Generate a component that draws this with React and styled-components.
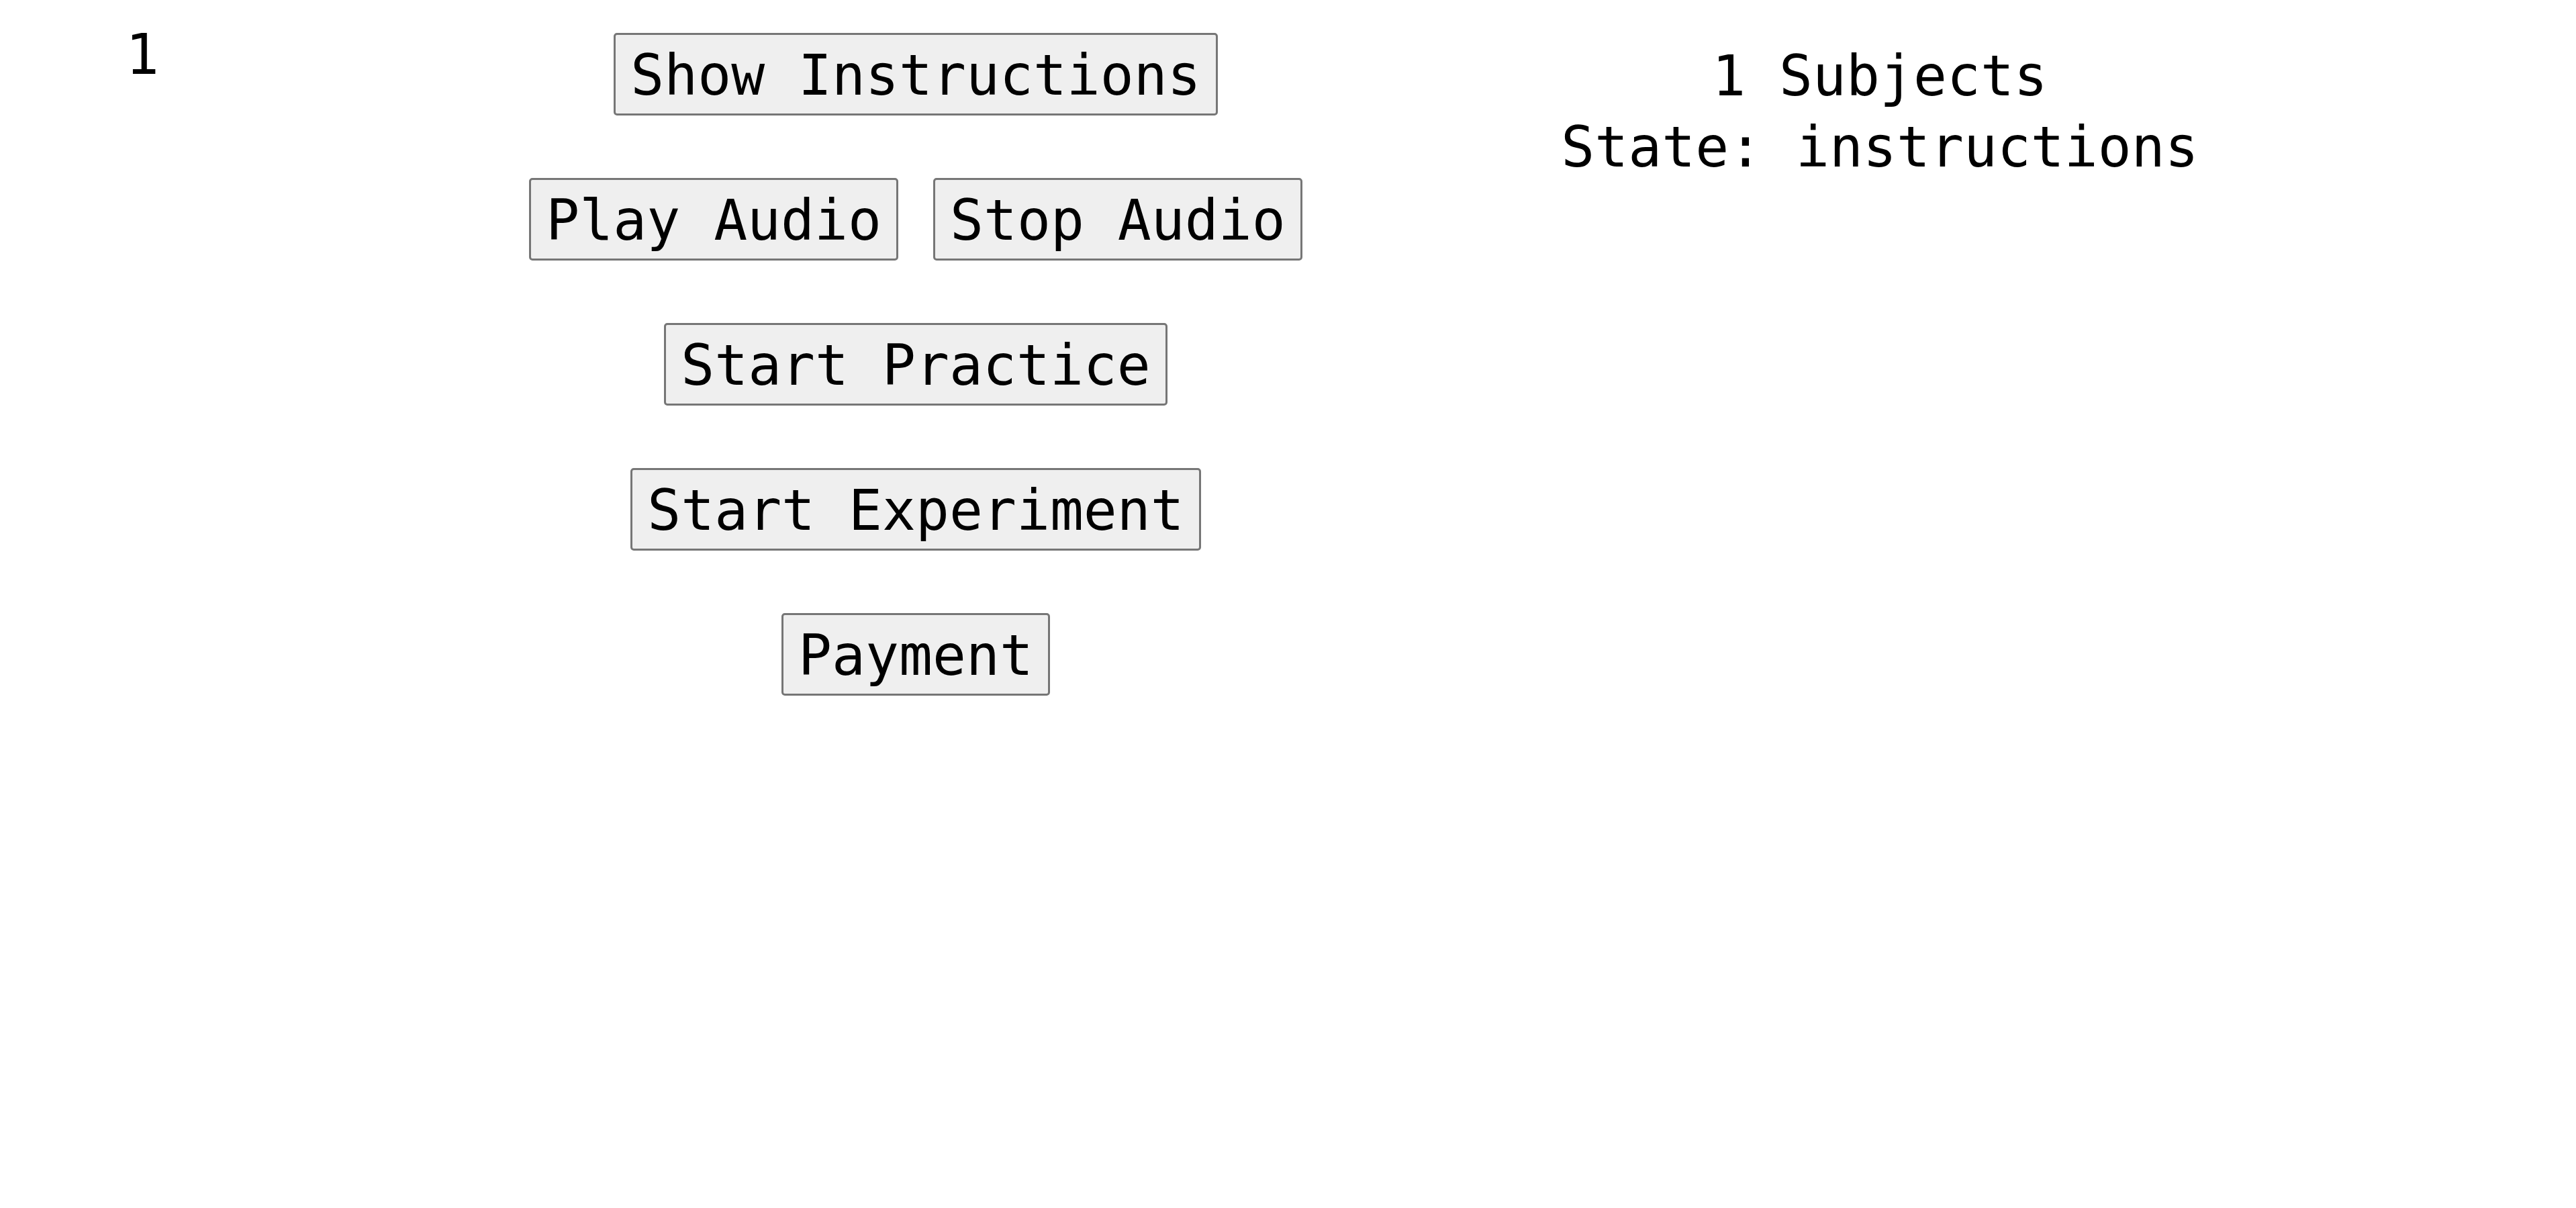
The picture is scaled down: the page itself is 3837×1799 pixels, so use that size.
import React from 'react'
import styled, { createGlobalStyle } from 'styled-components'

const GlobalStyle = createGlobalStyle`
  html, body {
    margin: 0;
    padding: 0;
    background: #ffffff;
  }
  body {
    font-family: "DejaVu Sans Mono", "Liberation Mono", monospace;
    font-size: 83px;
    color: #000000;
  }
`

const Page = styled.div`
  display: grid;
  grid-template-columns: 424px 1880px 992px;
  align-items: start;
  justify-items: center;
`

const Counter = styled.div`
  padding-top: 33px;
  line-height: normal;
`

const Controls = styled.div`
  display: flex;
  flex-direction: column;
  align-items: center;
  gap: 93px;
  padding-top: 49px;
`

const ButtonRow = styled.div`
  display: flex;
  gap: 52px;
`

const Button = styled.button`
  font-family: "DejaVu Sans Mono", "Liberation Mono", monospace;
  font-size: 83px;
  line-height: 98px;
  color: #000000;
  background: #efefef;
  border: 3px solid #767676;
  border-radius: 5px;
  padding: 12px 22px 7px;
  margin: 0;
  white-space: nowrap;
  cursor: pointer;
`

const Status = styled.div`
  padding-top: 61px;
  line-height: 106px;
  text-align: center;
  white-space: nowrap;
`

export default function App() {
  const subjects = 1
  const state = 'instructions'

  return (
    <>
      <GlobalStyle />
      <Page>
        <Counter>{subjects}</Counter>
        <Controls>
          <Button>Show Instructions</Button>
          <ButtonRow>
            <Button>Play Audio</Button>
            <Button>Stop Audio</Button>
          </ButtonRow>
          <Button>Start Practice</Button>
          <Button>Start Experiment</Button>
          <Button>Payment</Button>
        </Controls>
        <Status>
          <div>{subjects} Subjects</div>
          <div>State: {state}</div>
        </Status>
      </Page>
    </>
  )
}
